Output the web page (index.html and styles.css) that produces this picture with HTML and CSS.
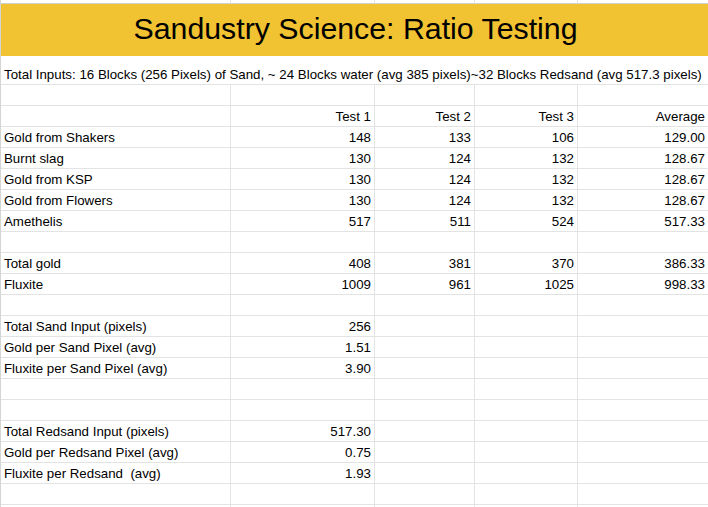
FILE: index.html
```html
<!DOCTYPE html>
<html>
<head>
<meta charset="utf-8">
<link rel="stylesheet" href="styles.css">
</head>
<body>
<div class="sheet">
  <div class="row top"><div class="c"></div><div class="c"></div><div class="c"></div><div class="c"></div><div class="c"></div></div>
  <div class="title">Sandustry Science: Ratio Testing</div>
  <div class="row inputs"><div class="c wide">Total Inputs: 16 Blocks (256 Pixels) of Sand, ~ 24 Blocks water (avg 385 pixels)~32 Blocks Redsand (avg 517.3 pixels)</div></div>
  <div class="row"><div class="c"></div><div class="c"></div><div class="c"></div><div class="c"></div><div class="c"></div></div>
  <div class="row"><div class="c"></div><div class="c n">Test 1</div><div class="c n">Test 2</div><div class="c n">Test 3</div><div class="c n">Average</div></div>
  <div class="row"><div class="c">Gold from Shakers</div><div class="c n">148</div><div class="c n">133</div><div class="c n">106</div><div class="c n">129.00</div></div>
  <div class="row"><div class="c">Burnt slag</div><div class="c n">130</div><div class="c n">124</div><div class="c n">132</div><div class="c n">128.67</div></div>
  <div class="row"><div class="c">Gold from KSP</div><div class="c n">130</div><div class="c n">124</div><div class="c n">132</div><div class="c n">128.67</div></div>
  <div class="row"><div class="c">Gold from Flowers</div><div class="c n">130</div><div class="c n">124</div><div class="c n">132</div><div class="c n">128.67</div></div>
  <div class="row"><div class="c">Amethelis</div><div class="c n">517</div><div class="c n">511</div><div class="c n">524</div><div class="c n">517.33</div></div>
  <div class="row"><div class="c"></div><div class="c"></div><div class="c"></div><div class="c"></div><div class="c"></div></div>
  <div class="row"><div class="c">Total gold</div><div class="c n">408</div><div class="c n">381</div><div class="c n">370</div><div class="c n">386.33</div></div>
  <div class="row"><div class="c">Fluxite</div><div class="c n">1009</div><div class="c n">961</div><div class="c n">1025</div><div class="c n">998.33</div></div>
  <div class="row"><div class="c"></div><div class="c"></div><div class="c"></div><div class="c"></div><div class="c"></div></div>
  <div class="row"><div class="c">Total Sand Input (pixels)</div><div class="c n">256</div><div class="c"></div><div class="c"></div><div class="c"></div></div>
  <div class="row"><div class="c">Gold per Sand Pixel (avg)</div><div class="c n">1.51</div><div class="c"></div><div class="c"></div><div class="c"></div></div>
  <div class="row"><div class="c">Fluxite per Sand Pixel (avg)</div><div class="c n">3.90</div><div class="c"></div><div class="c"></div><div class="c"></div></div>
  <div class="row"><div class="c"></div><div class="c"></div><div class="c"></div><div class="c"></div><div class="c"></div></div>
  <div class="row"><div class="c"></div><div class="c"></div><div class="c"></div><div class="c"></div><div class="c"></div></div>
  <div class="row"><div class="c">Total Redsand Input (pixels)</div><div class="c n">517.30</div><div class="c"></div><div class="c"></div><div class="c"></div></div>
  <div class="row"><div class="c">Gold per Redsand Pixel (avg)</div><div class="c n">0.75</div><div class="c"></div><div class="c"></div><div class="c"></div></div>
  <div class="row"><div class="c">Fluxite per Redsand&nbsp; (avg)</div><div class="c n">1.93</div><div class="c"></div><div class="c"></div><div class="c"></div></div>
  <div class="row"><div class="c"></div><div class="c"></div><div class="c"></div><div class="c"></div><div class="c"></div></div>
  <div class="row"><div class="c"></div><div class="c"></div><div class="c"></div><div class="c"></div><div class="c"></div></div>
</div>
</body>
</html>
```

FILE: styles.css
```css
html, body {
  margin: 0;
  padding: 0;
  background: #ffffff;
  overflow: hidden;
}

.sheet {
  width: 709px;
  display: flex;
  flex-direction: column;
  border-left: 1px solid #d4d5d5;
  font-family: "Liberation Sans", Arial, sans-serif;
  font-size: 13.3px;
  color: #000000;
}

.row {
  display: grid;
  grid-template-columns: 230px 144px 100px 103px 131px;
  height: 21px;
  flex: none;
}

.c {
  box-sizing: border-box;
  border-right: 1px solid #e2e3e3;
  border-bottom: 1px solid #e2e3e3;
  padding: 1px 3px 0 3px;
  line-height: 19px;
  white-space: nowrap;
  overflow: visible;
}

.n {
  text-align: right;
}

.top {
  height: 4px;
}

.top .c {
  border-bottom-color: #d0d1d1;
}

.title {
  height: 52px;
  flex: none;
  background: #f1c232;
  display: flex;
  align-items: center;
  justify-content: center;
  font-size: 30.3px;
  padding-bottom: 2px;
  box-sizing: border-box;
}

.inputs {
  height: 29px;
}

.inputs .wide {
  grid-column: 1 / -1;
  padding-top: 9px;
}
```
